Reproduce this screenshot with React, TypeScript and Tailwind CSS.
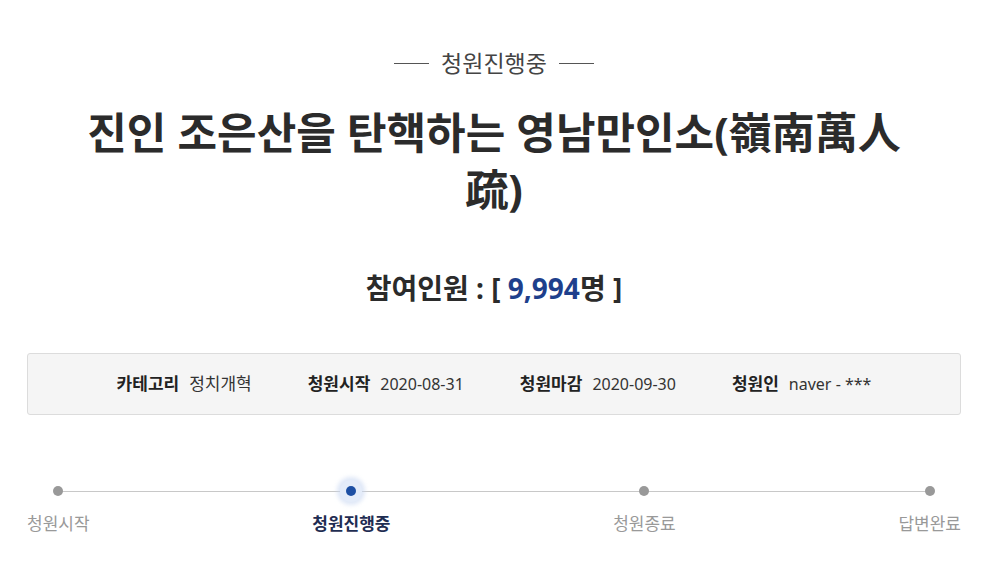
const font = { fontFamily: '"Noto Sans", "Noto Sans CJK KR", sans-serif' };

const info = [
  { label: "카테고리", value: "정치개혁" },
  { label: "청원시작", value: "2020-08-31" },
  { label: "청원마감", value: "2020-09-30" },
  { label: "청원인", value: "naver - ***" },
];

const steps = [
  { name: "청원시작", active: false },
  { name: "청원진행중", active: true },
  { name: "청원종료", active: false },
  { name: "답변완료", active: false },
];

export default function App() {
  return (
    <div className="w-[991px] h-[587px] bg-white pl-[27px] pr-[30px] pt-[49px] text-[#333]" style={font}>
      {/* status label */}
      <div className="flex items-center justify-center gap-[12px]">
        <span className="h-px w-[35px] bg-[#555]" />
        <span className="text-[23px] leading-[28px] text-[#444]">청원진행중</span>
        <span className="h-px w-[35px] bg-[#555]" />
      </div>

      <h1 className="mt-[27px] px-[45px] text-center text-[43px] font-bold leading-[57px] text-[#2b2b2b]">
        진인 조은산을 탄핵하는 영남만인소(嶺南萬人疏)
      </h1>

      <p className="mt-[52px] text-center text-[28px] font-bold leading-[36px] text-[#2b2b2b]">
        참여인원 : [ <span className="text-[#1e3f8c]">9,994</span>명 ]
      </p>

      <div className="mt-[47px] flex h-[62px] items-center justify-center gap-[56px] rounded-[3px] border border-[#dcdcdc] bg-[#f5f5f5] text-[16px]">
        {info.map((it, i) => (
          <div key={it.label} className="flex items-center gap-[10px]">
            <span className="text-[17px] font-bold text-[#222]">{it.label}</span>
            <span className={i === 0 ? "text-[17px] text-[#333]" : "text-[#333]"}>{it.value}</span>
          </div>
        ))}
      </div>

      {/* progress */}
      <div className="relative mt-[64px]">
        <div className="absolute left-[30px] right-[30px] top-[12px] h-px bg-[#c8c8c8]" />
        <div className="relative flex justify-between">
          {steps.map((s) => (
            <div key={s.name} className="flex flex-col items-center">
              <div className="flex h-[24px] w-[24px] items-center justify-center">
                {s.active ? (
                  <span className="flex h-[22px] w-[22px] items-center justify-center rounded-full bg-[#e4ecf9] shadow-[0_0_4px_3px_rgba(200,215,242,0.6)]">
                    <span className="h-[10px] w-[10px] rounded-full bg-[#1d4fa3]" />
                  </span>
                ) : (
                  <span className="h-[10px] w-[10px] rounded-full bg-[#999]" />
                )}
              </div>
              <span
                className={
                  s.active
                    ? "mt-[10px] text-[17px] font-bold leading-[22px] text-[#1f2d52]"
                    : "mt-[10px] text-[17px] leading-[22px] text-[#999]"
                }
              >
                {s.name}
              </span>
            </div>
          ))}
        </div>
      </div>
    </div>
  );
}
